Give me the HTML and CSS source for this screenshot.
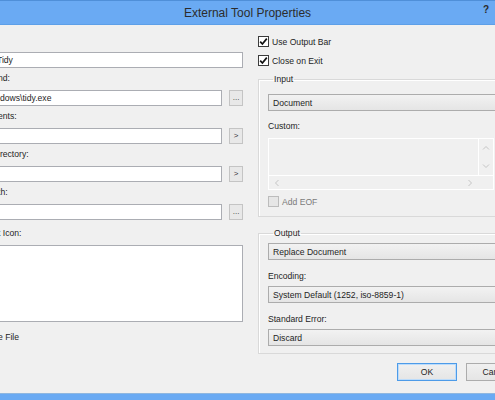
FILE: index.html
```html
<!DOCTYPE html>
<html>
<head>
<meta charset="utf-8">
<title>External Tool Properties</title>
<link rel="stylesheet" href="styles.css">
</head>
<body>
<div class="window">
  <div class="titlebar">
    <span class="title">External Tool Properties</span>
    <span class="help">?</span>
  </div>
  <div class="content">
    <div class="main">
      <div class="left">
        <div class="input name-input"><span class="value">Tidy</span></div>
        <div class="label">nd:</div>
        <div class="row">
          <div class="input"><span class="value">dows\tidy.exe</span></div>
          <div class="btn">...</div>
        </div>
        <div class="label">ents:</div>
        <div class="row">
          <div class="input"></div>
          <div class="btn">&gt;</div>
        </div>
        <div class="label">irectory:</div>
        <div class="row">
          <div class="input"></div>
          <div class="btn">&gt;</div>
        </div>
        <div class="label">th:</div>
        <div class="row">
          <div class="input"></div>
          <div class="btn">...</div>
        </div>
        <div class="label icon-label">t Icon:</div>
        <div class="iconbox"></div>
        <div class="label save-label">e File</div>
      </div>
      <div class="right">
        <div class="check first-check">
          <span class="box"><svg viewBox="0 0 11 11" width="11" height="11"><path d="M2.2 5.6 L4.4 8 L8.8 2.6" fill="none" stroke="#111" stroke-width="1.7"/></svg></span>
          <span>Use Output Bar</span>
        </div>
        <div class="check second-check">
          <span class="box"><svg viewBox="0 0 11 11" width="11" height="11"><path d="M2.2 5.6 L4.4 8 L8.8 2.6" fill="none" stroke="#111" stroke-width="1.7"/></svg></span>
          <span>Close on Exit</span>
        </div>
        <fieldset class="group input-group">
          <legend>Input</legend>
          <div class="combo">Document</div>
          <div class="label custom-label">Custom:</div>
          <div class="custom">
            <div class="custom-top">
              <div class="custom-text"></div>
              <div class="vscroll">
                <svg viewBox="0 0 8 5" width="8" height="5"><path d="M1 4.5 L4 1.5 L7 4.5" fill="none" stroke="#c4c4c4" stroke-width="1"/></svg>
                <svg viewBox="0 0 8 5" width="8" height="5"><path d="M1 0.5 L4 3.5 L7 0.5" fill="none" stroke="#c4c4c4" stroke-width="1"/></svg>
              </div>
            </div>
            <div class="hscroll">
              <svg viewBox="0 0 5 8" width="5" height="8"><path d="M4.5 1 L1.5 4 L4.5 7" fill="none" stroke="#c4c4c4" stroke-width="1"/></svg>
              <svg viewBox="0 0 5 8" width="5" height="8"><path d="M0.5 1 L3.5 4 L0.5 7" fill="none" stroke="#c4c4c4" stroke-width="1"/></svg>
            </div>
          </div>
          <div class="check disabled">
            <span class="box"></span>
            <span>Add EOF</span>
          </div>
        </fieldset>
        <fieldset class="group output-group">
          <legend>Output</legend>
          <div class="combo">Replace Document</div>
          <div class="label out-label">Encoding:</div>
          <div class="combo">System Default (1252, iso-8859-1)</div>
          <div class="label out-label">Standard Error:</div>
          <div class="combo">Discard</div>
        </fieldset>
      </div>
    </div>
    <div class="buttons">
      <div class="button default">OK</div>
      <div class="button">Cancel</div>
    </div>
  </div>
  <div class="frame-bottom"></div>
</div>
</body>
</html>
```

FILE: styles.css
```css
html, body {
  margin: 0;
  padding: 0;
}
body {
  width: 495px;
  height: 400px;
  overflow: hidden;
  background: #f0f0f0;
  font-family: "Liberation Sans", Arial, sans-serif;
  font-size: 8.6px;
  color: #1e1e1e;
}
.window {
  display: flex;
  flex-direction: column;
  height: 400px;
}
.titlebar {
  height: 25px;
  box-sizing: border-box;
  border-top: 1px solid #4f8fd8;
  border-bottom: 1px solid #5d9fe8;
  background: #6aaaf3;
  display: flex;
  align-items: center;
  justify-content: center;
  position: relative;
}
.title {
  font-size: 12px;
  color: #2c2c2c;
}
.help {
  position: absolute;
  right: 6px;
  top: 3px;
  font-size: 10px;
  font-weight: bold;
  color: #2a2a2a;
}
.content {
  flex: 1;
  display: flex;
  flex-direction: column;
}
.main {
  display: flex;
  height: 338px;
}
.left {
  margin-left: -2px;
  width: 245px;
  flex: none;
  padding-top: 27px;
}
.input {
  height: 16px;
  box-sizing: border-box;
  border: 1px solid #abadb3;
  background: #fff;
  display: flex;
  align-items: center;
  overflow: hidden;
  white-space: nowrap;
}
.name-input {
  width: 245px;
}
.value {
  padding-left: 1px;
}
.name-input .value {
  margin-left: -3px;
}
.label {
  height: 12px;
  line-height: 12px;
  margin-top: 4px;
  margin-bottom: 6px;
  white-space: nowrap;
}
.row {
  display: flex;
  gap: 7px;
}
.row .input {
  width: 225px;
}
.btn {
  width: 14px;
  height: 16px;
  box-sizing: border-box;
  border: 1px solid #c4c4c4;
  background: #e8e8e8;
  display: flex;
  align-items: center;
  justify-content: center;
  font-size: 8px;
  color: #333;
  line-height: 1;
}
.icon-label {
  margin-top: 7px;
}
.iconbox {
  width: 245px;
  height: 77px;
  box-sizing: border-box;
  border: 1px solid #abadb3;
  background: #fff;
}
.save-label {
  margin-top: 9px;
}
.right {
  margin-left: 15px;
  width: 250px;
  flex: none;
}
.check {
  display: flex;
  align-items: center;
  height: 11px;
  gap: 3px;
  white-space: nowrap;
}
.first-check {
  margin-top: 11px;
}
.second-check {
  margin-top: 8px;
}
.box {
  width: 11px;
  height: 11px;
  box-sizing: border-box;
  border: 1px solid #3c3c3c;
  background: #fff;
  display: flex;
  flex: none;
}
.box svg {
  margin: -1px;
}
.check.disabled {
  color: #7a7a7a;
  margin-top: 6px;
}
.check.disabled .box {
  border-color: #bcbcbc;
  background: #e6e6e6;
}
.group {
  margin: 0;
  border: 1px solid #d9d9d9;
  box-shadow: inset 1px 1px 0 #fff;
  min-width: 0;
}
.group legend {
  padding: 0 1px;
  margin-left: 5px;
  height: 12px;
  line-height: 12px;
}
.input-group {
  margin-top: 7px;
  padding: 9px 0 9px 9px;
}
.output-group {
  margin-top: 10px;
  padding: 4px 0 7px 9px;
}
.combo {
  height: 17px;
  box-sizing: border-box;
  border: 1px solid #acacac;
  border-right: none;
  background: linear-gradient(#f2f2f2, #e5e5e5);
  display: flex;
  align-items: center;
  padding-left: 4px;
  white-space: nowrap;
}
.custom-label {
  margin-top: 9px;
  margin-bottom: 6px;
}
.out-label {
  margin-top: 10px;
  margin-bottom: 4px;
}
.custom {
  width: 226px;
  height: 52px;
  box-sizing: border-box;
  border: 1px solid #fff;
  display: flex;
  flex-direction: column;
}
.custom-top {
  display: flex;
  height: 36px;
  border-bottom: 1px solid #fff;
}
.custom-text {
  flex: 1;
  border-right: 1px solid #fff;
}
.vscroll {
  width: 14px;
  display: flex;
  flex-direction: column;
  align-items: center;
  justify-content: space-between;
  padding: 6px 0 6px;
}
.hscroll {
  flex: 1;
  display: flex;
  align-items: center;
  justify-content: space-between;
  padding: 0 20px 0 5px;
}
.buttons {
  display: flex;
  gap: 9px;
  padding-left: 397px;
}
.button {
  flex: none;
  width: 60px;
  height: 18px;
  box-sizing: border-box;
  border: 1px solid #acacac;
  background: linear-gradient(#f0f0f0, #e5e5e5);
  display: flex;
  align-items: center;
  justify-content: center;
  white-space: nowrap;
}
.button.default {
  border-color: #4d9be8;
  box-shadow: inset 0 0 0 1px #bcdcfb;
}
.frame-bottom {
  height: 7px;
  box-sizing: border-box;
  border-top: 1px solid #8fb7e0;
  background: #6aaaf3;
}
```
